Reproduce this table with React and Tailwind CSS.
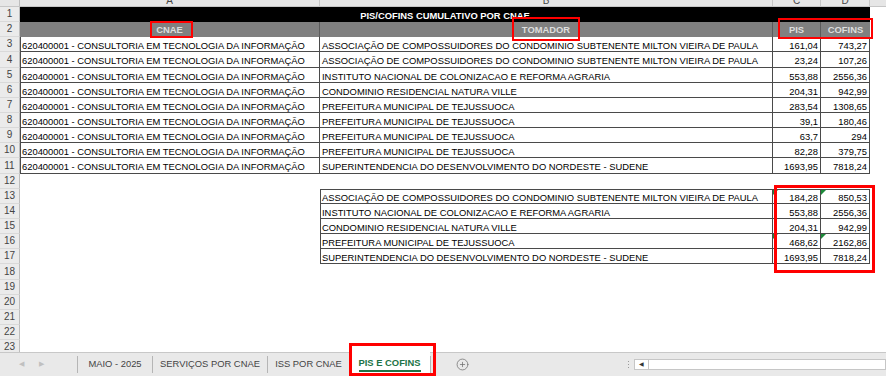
import React from 'react';
import { CirclePlus } from 'lucide-react';

const FONT = "font-[family-name:'Liberation_Sans',Arial,sans-serif]";

const ASSOC = 'ASSOCIAÇÃO DE COMPOSSUIDORES DO CONDOMINIO SUBTENENTE MILTON VIEIRA DE PAULA';
const INCRA = 'INSTITUTO NACIONAL DE COLONIZACAO E REFORMA AGRARIA';
const NATURA = 'CONDOMINIO RESIDENCIAL NATURA VILLE';
const PREF = 'PREFEITURA MUNICIPAL DE TEJUSSUOCA';
const SUDENE = 'SUPERINTENDENCIA DO DESENVOLVIMENTO DO NORDESTE - SUDENE';
const CNAE = '620400001 - CONSULTORIA EM TECNOLOGIA DA INFORMAÇÃO';

// linhas 3 a 11
const lancamentos = [
  [ASSOC, '161,04', '743,27'],
  [ASSOC, '23,24', '107,26'],
  [INCRA, '553,88', '2556,36'],
  [NATURA, '204,31', '942,99'],
  [PREF, '283,54', '1308,65'],
  [PREF, '39,1', '180,46'],
  [PREF, '63,7', '294'],
  [PREF, '82,28', '379,75'],
  [SUDENE, '1693,95', '7818,24'],
];

// linhas 13 a 17 (o último campo marca o triângulo verde de "número como texto")
const resumo = [
  [ASSOC, '184,28', '850,53', true],
  [INCRA, '553,88', '2556,36', false],
  [NATURA, '204,31', '942,99', false],
  [PREF, '468,62', '2162,86', true],
  [SUDENE, '1693,95', '7818,24', false],
];

const Linha = ({ n, children }) => (
  <div className={`flex shrink-0 ${[4, 11, 18].includes(n) ? 'h-[16px]' : 'h-[15px]'}`}>
    <div className="w-[20px] shrink-0 flex items-center justify-center bg-[#ebebeb] border-r border-b border-r-[#bdbdbd] border-b-[#d9d9d9] text-[10px] leading-[14px] text-[#444]">
      {n}
    </div>
    {children}
  </div>
);

const Triangulo = () => (
  <span className="absolute left-0 top-0 block w-0 h-0 border-t-[5px] border-r-[5px] border-t-[#1d8a3a] border-r-transparent" />
);

const Caixa = ({ className }) => (
  <div className={`absolute border-[#ff0000] pointer-events-none ${className}`} />
);

const Separador = () => <div className="self-center w-px h-[17px] bg-[#b5b5b5] shrink-0" />;

export default function App() {
  return (
    <div className={`relative w-[886px] h-[376px] overflow-hidden bg-white text-black ${FONT}`}>
      {/* cabeçalho das colunas */}
      <div className="flex h-[7px] bg-[#e6e6e6] border-b border-[#c6c6c6] text-[10px] text-[#444] overflow-hidden">
        <div className="w-[20px] shrink-0 border-r border-[#bdbdbd]" />
        <div className="w-[300px] shrink-0 border-r border-[#c6c6c6] text-center"><div className="-mt-[4px] leading-[10px]">A</div></div>
        <div className="w-[453px] shrink-0 border-r border-[#c6c6c6] text-center"><div className="-mt-[4px] leading-[10px]">B</div></div>
        <div className="w-[48px] shrink-0 border-r border-[#c6c6c6] text-center"><div className="-mt-[4px] leading-[10px]">C</div></div>
        <div className="w-[49px] shrink-0 border-r border-[#c6c6c6] text-center"><div className="-mt-[4px] leading-[10px]">D</div></div>
        <div className="flex-1" />
      </div>

      {/* planilha */}
      <div className="flex flex-col h-[345px] overflow-hidden text-[9.4px] leading-[18px] whitespace-nowrap">
        <Linha n={1}>
          <div className="w-[850px] shrink-0 bg-black text-white font-bold text-center leading-[17px]">PIS/COFINS CUMULATIVO POR CNAE</div>
        </Linha>
        <Linha n={2}>
          <div className="w-[300px] shrink-0 bg-[#808080] border-r border-[#5b5b5b] text-center font-bold text-[#dedede] leading-[16px]">CNAE</div>
          <div className="w-[453px] shrink-0 bg-[#808080] border-r border-[#5b5b5b] text-center font-bold text-[#dedede] leading-[16px]">TOMADOR</div>
          <div className="w-[48px] shrink-0 bg-[#808080] border-r border-[#5b5b5b] text-center font-bold text-[#dedede] leading-[16px]">PIS</div>
          <div className="w-[49px] shrink-0 bg-[#808080] text-center font-bold text-[#dedede] leading-[16px]">COFINS</div>
        </Linha>

        {lancamentos.map(([tomador, pis, cofins], i) => (
          <Linha key={i} n={i + 3}>
            <div className="w-[300px] shrink-0 overflow-hidden border-l border-r border-b border-[#4a4a4a] pl-[1px]">{CNAE}</div>
            <div className="w-[453px] shrink-0 overflow-hidden border-r border-b border-[#4a4a4a] pl-[2px]">{tomador}</div>
            <div className="w-[48px] shrink-0 overflow-hidden border-r border-b border-[#4a4a4a] pr-[2px] text-right">{pis}</div>
            <div className="w-[49px] shrink-0 overflow-hidden border-r border-b border-[#4a4a4a] pr-[2px] text-right">{cofins}</div>
          </Linha>
        ))}

        <Linha n={12} />

        {resumo.map(([tomador, pis, cofins, texto], i) => (
          <Linha key={i} n={i + 13}>
            <div className="w-[300px] shrink-0" />
            <div className={`w-[453px] shrink-0 overflow-hidden border-l border-r border-b border-[#4a4a4a] pl-[1px] ${i === 0 ? 'border-t leading-[16px]' : ''}`}>{tomador}</div>
            <div className={`relative w-[48px] shrink-0 overflow-hidden border-r border-b border-[#4a4a4a] pr-[2px] text-right ${i === 0 ? 'border-t leading-[16px]' : ''}`}>
              {texto && <Triangulo />}
              {pis}
            </div>
            <div className={`relative w-[49px] shrink-0 overflow-hidden border-r border-b border-[#4a4a4a] pr-[2px] text-right ${i === 0 ? 'border-t leading-[16px]' : ''}`}>
              {texto && <Triangulo />}
              {cofins}
            </div>
          </Linha>
        ))}

        {[18, 19, 20, 21, 22, 23].map((n) => (
          <Linha key={n} n={n} />
        ))}
      </div>

      {/* abas */}
      <div className="flex h-[24px] bg-[#e9e9e9] border-t border-[#c8c8c8] text-[9.4px] text-[#444] whitespace-nowrap">
        <div className="w-[77px] shrink-0 flex items-center text-[#c0c0c0] text-[7px]">
          <span className="ml-[19px]">◀</span>
          <span className="ml-[15px]">▶</span>
        </div>
        <Separador />
        <div className="w-[74px] shrink-0 flex items-center justify-center">MAIO - 2025</div>
        <Separador />
        <div className="w-[114px] shrink-0 flex items-center justify-center">SERVIÇOS POR CNAE</div>
        <Separador />
        <div className="w-[81px] shrink-0 flex items-center justify-center">ISS POR CNAE</div>
        <div className="w-[81px] shrink-0 -mt-px flex items-center justify-center bg-white font-bold text-[#217346]">
          <span className="border-b-2 border-[#217346] leading-[14px]">PIS E COFINS</span>
        </div>
        <Separador />
        <div className="w-[62px] shrink-0 flex items-center justify-center text-[#707070]">
          <CirclePlus size={13} strokeWidth={1.4} />
        </div>
        <div className="flex-1" />
        <div className="w-[12px] shrink-0 flex flex-col items-center justify-center gap-[2px]">
          <span className="block w-px h-px bg-[#9a9a9a]" />
          <span className="block w-px h-px bg-[#9a9a9a]" />
          <span className="block w-px h-px bg-[#9a9a9a]" />
        </div>
        <div className="w-[252px] shrink-0 flex items-center">
          <div className="flex w-full h-[11px] bg-white border border-[#c6c6c6]">
            <div className="w-[14px] shrink-0 flex items-center justify-center border-r border-[#c6c6c6] text-[6px] text-[#333]">◀</div>
          </div>
        </div>
      </div>

      {/* destaques em vermelho */}
      <Caixa className="left-[150px] top-[21px] w-[43px] h-[17px] border-2" />
      <Caixa className="left-[512px] top-[17px] w-[68px] h-[24px] border-2" />
      <Caixa className="left-[778px] top-[18px] w-[95px] h-[21px] border-2" />
      <Caixa className="left-[774px] top-[185px] w-[101px] h-[88px] border-[3px]" />
      <Caixa className="left-[349px] top-[343px] w-[87px] h-[33px] border-[3px]" />
    </div>
  );
}
